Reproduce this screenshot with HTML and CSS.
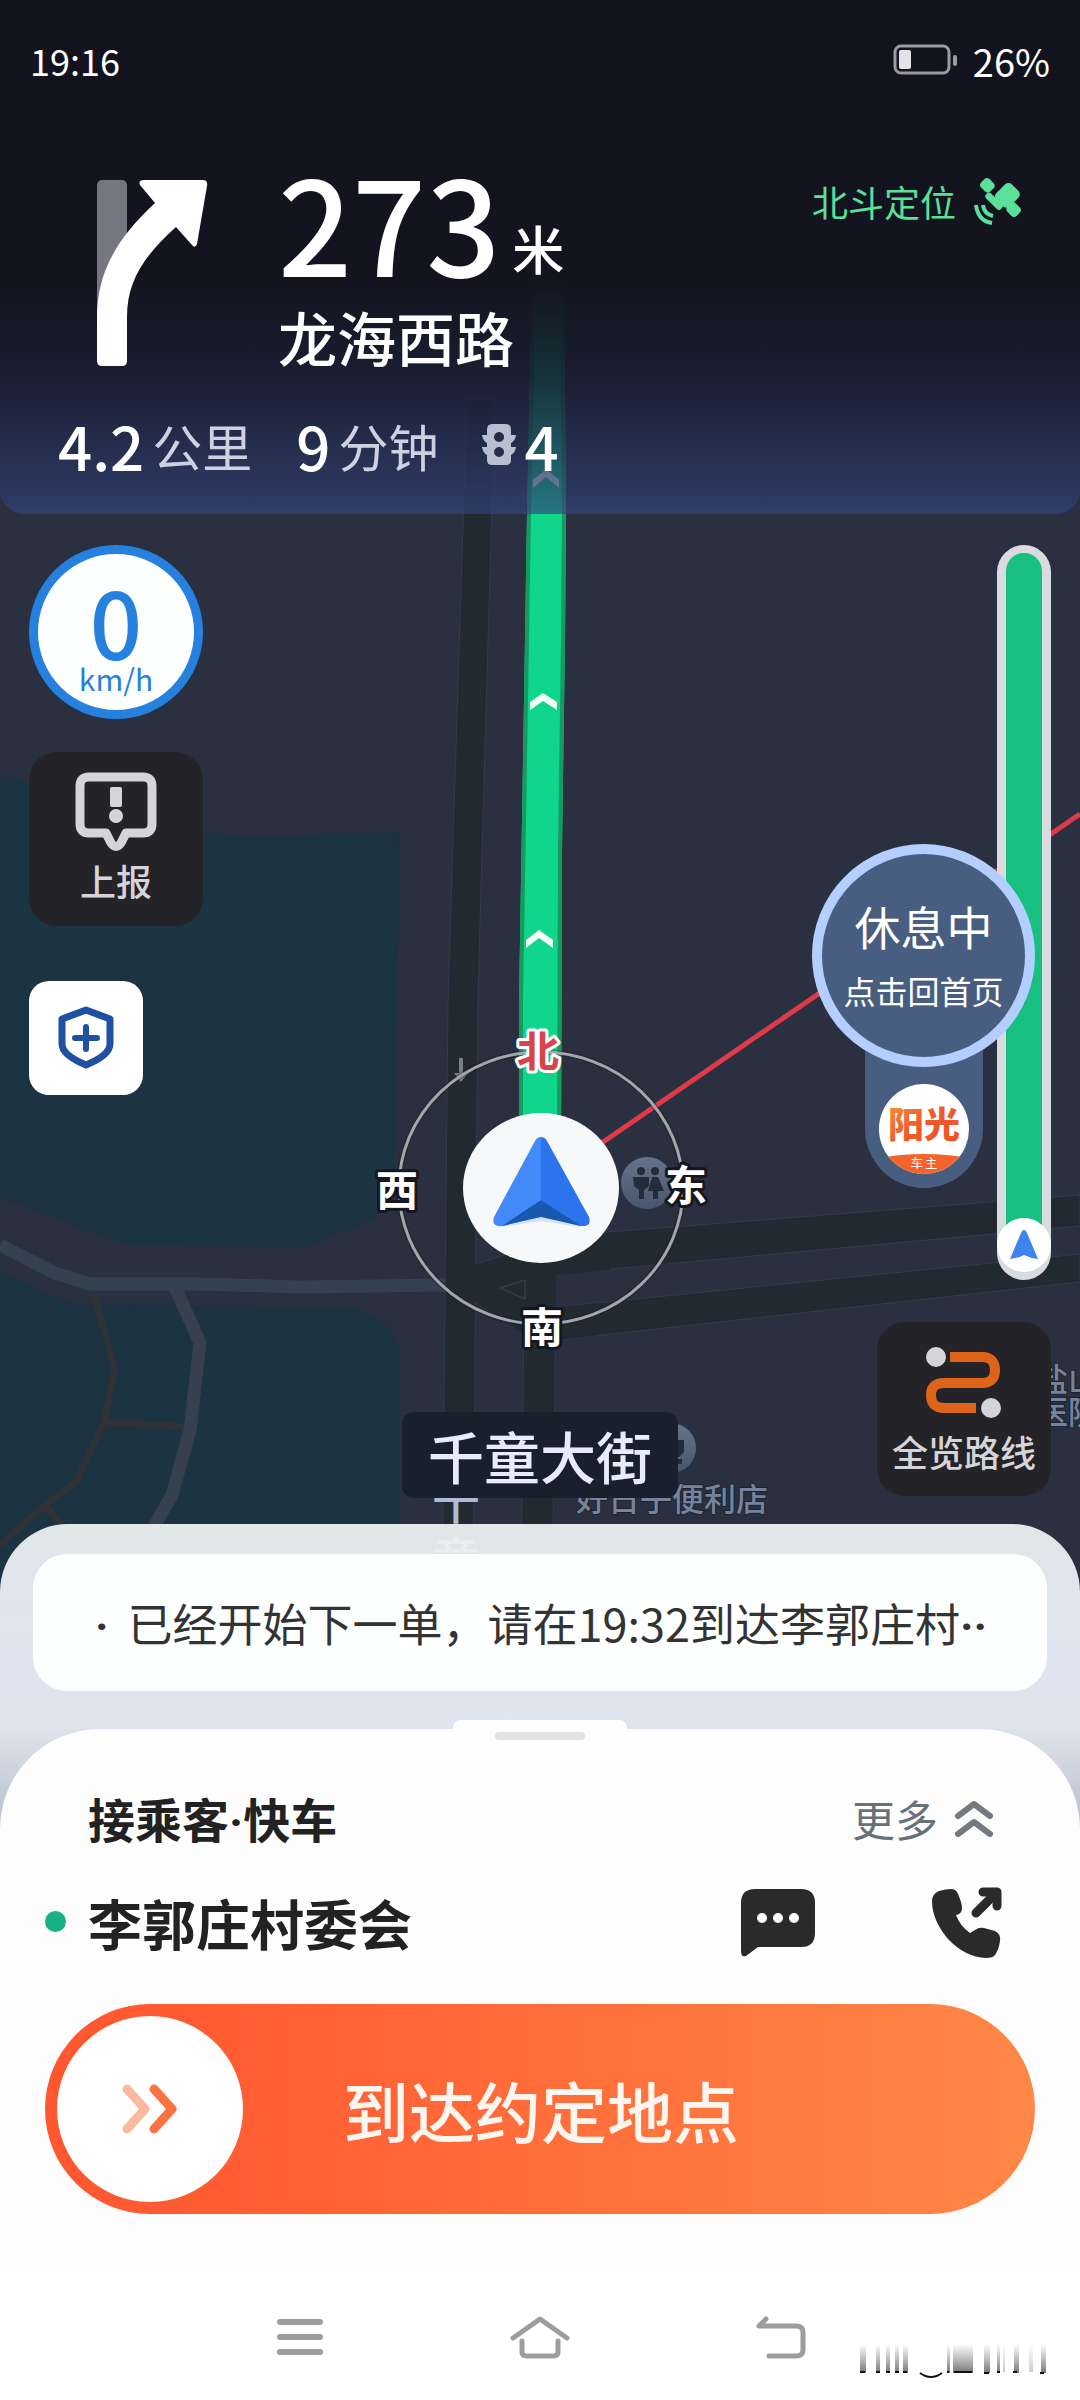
FILE: index.html
```html
<!DOCTYPE html>
<html lang="zh-CN">
<head>
<meta charset="utf-8">
<meta name="viewport" content="width=device-width, initial-scale=1">
<title>导航 - 接乘客</title>
<link rel="stylesheet" href="styles.css">
</head>
<body>
<div class="screen">
  <svg class="map" viewBox="0 0 1080 2400" preserveAspectRatio="xMidYMin slice" aria-hidden="true">
    <defs>
      <linearGradient id="poi" x1="0" y1="0" x2="0" y2="1"><stop offset="0" stop-color="#66748b"/><stop offset="1" stop-color="#48566c"/></linearGradient>
    </defs>
    <rect width="1080" height="2400" fill="#2a303f"/>
    <g fill="#1c3341">
      <path d="M0 775L30 782L230 837L400 832L394 1170Q392 1208 370 1221L305 1247L130 1245L90 1232L0 1197Z"/>
      <path d="M0 1272L70 1303L355 1308Q400 1322 400 1358V1900H0Z"/>
    </g>
    <g fill="none" stroke-linejoin="round">
      <path d="M95 1298L115 1370L104 1422L76 1482L45 1505L0 1545M104 1422L188 1427M45 1505L66 1530" stroke="#2f3237" stroke-width="7"/>
      <path d="M175 1287L200 1343L190 1430L172 1495L140 1550" stroke="#36404f" stroke-width="13"/>
      <path d="M0 1245L55 1273L90 1284H200L300 1287L445 1285" stroke="#344150" stroke-width="13"/>
    </g>
    <g fill="#222a31" stroke="#2e3d50" stroke-width="1">
      <path d="M557 1236L1080 1195V1226L557 1274Z"/>
      <path d="M557 1307L1080 1254V1282L557 1340Z"/>
      <path d="M467 400L448 1000L442 1600H473L478 1000L482 850L495 400Z"/>
      <path d="M524 1300L521 1600H552L556 1300Z"/>
    </g>
    <path d="M474 1265L540 1240L610 1236V1270L556 1275V1307L600 1303V1335L556 1340L525 1335L474 1300Z" fill="#222a31"/>
    <path d="M476 1180V1264L510 1253L560 1225V1180Z" fill="#2a303f" stroke="#2e3d50"/>
    <path d="M500 1288L525 1280V1299Z" fill="#222a31" stroke="#34465a"/>
    <path d="M519 1160V1000L524 700L527 514L532 270H564L566 514L565 640L562 850L561 1160Z" fill="#0fd68a"/>
    <path d="M521 1160V1000L526 700L529 514L534 270M559 1160L560 850L563 640L564 514L562 270" fill="none" stroke="#169a60" stroke-width="4"/>
    <g fill="#f4fff9">
      <path d="M530 702L543 693L557 702V710L543 701L530 710Z"/>
      <path d="M526 940L539 930L553 940V948L539 938L526 948Z"/>
      <path d="M533 480L546 469L559 480V488L546 477L533 488Z"/>
    </g>
    <path d="M461 1058V1078" stroke="#7c8187" stroke-width="4"/><path d="M454 1073L461 1082L468 1073Z" fill="#7c8187"/>
    <circle cx="647" cy="1183" r="26" fill="url(#poi)"/>
    <g fill="#232c3a"><circle cx="641" cy="1171" r="4"/><circle cx="655" cy="1171" r="4"/><path d="M633 1177H649V1186L644 1190V1199H639V1190L634 1186ZM652 1177H658L664 1191H658V1199H653V1191H648Z"/></g>
    <circle cx="671" cy="1448" r="25" fill="url(#poi)"/>
    <path d="M664 1440H684V1452L679 1457H664ZM676 1459h6v5h-6z" fill="#232c3a"/>
    <g class="poi-text">
      <text x="576" y="1511">好日子便利店</text>
      <text x="1036" y="1391">盐山</text>
      <text x="1036" y="1424">医院</text>
    </g>
    <g class="street-text"><text x="432" y="1519">千</text><text x="432" y="1578">童</text></g>
    <path d="M590 1151L1080 814" stroke="#df3a49" stroke-width="5"/>
    <ellipse cx="541" cy="1188" rx="142" ry="136" fill="none" stroke="#15181f" stroke-opacity=".3" stroke-width="6"/>
    <ellipse cx="541" cy="1188" rx="142" ry="136" fill="none" stroke="#a3a7ad" stroke-width="3"/>
    <ellipse cx="541" cy="1188" rx="78" ry="75" fill="#f6f8f9"/>
    <path d="M497 1217L541 1145L585 1217Q590 1224 580 1227L541 1221L501 1227Q492 1226 497 1217Z" fill="#9fc0fb" opacity=".4"/>
    <path d="M541 1137Q537 1137 535 1141L494 1217Q491 1227 502 1226L541 1216Z" fill="#4289fa"/>
    <path d="M541 1137Q545 1137 547 1141L589 1217Q592 1227 581 1226L541 1216Z" fill="#2c74ee"/>
    <path d="M541 1200L502 1226L541 1217L581 1226Z" fill="#1859ae"/>
    <g class="compass-text">
      <text class="north" x="538" y="1067">北</text>
      <text x="397" y="1206">西</text>
      <text x="686" y="1201">东</text>
      <text x="542" y="1343">南</text>
    </g>
  </svg>

  <header class="guide">
    <div class="status">
      <time>19:16</time>
      <div class="battery">
        <svg width="66" height="32" viewBox="0 0 66 32" aria-hidden="true"><rect x="2" y="2" width="54" height="27" rx="6" fill="none" stroke="#9a9ba3" stroke-width="3"/><rect x="6" y="6" width="12" height="19" rx="2" fill="#e3e3e6"/><rect x="60" y="11" width="4" height="11" rx="2" fill="#9a9ba3"/></svg>
        <span>26%</span>
      </div>
    </div>
    <div class="maneuver">
      <svg class="turn" width="112" height="188" viewBox="0 0 112 188" role="img" aria-label="右转"><rect x="0" y="0" width="30" height="140" rx="5" fill="#767780"/><path d="M0 181V135C1 93 18 60 58 23L43 5Q41 0 47 0H106Q111 0 110 6L100 64Q98 69 95 65L79 47C48 75 30 100 30 137V181Q30 186 25 186H5Q0 186 0 181Z" fill="#fff"/></svg>
      <div class="step">
        <p class="distance">273<span>米</span></p>
        <p class="road">龙海西路</p>
      </div>
      <div class="beidou">北斗定位
        <svg width="50" height="50" viewBox="0 0 50 50" aria-hidden="true"><g fill="#5be09a"><rect x="22" y="10" width="22" height="19" rx="5" transform="rotate(-45 33 19)"/><rect x="7" y="3" width="12" height="13" rx="4" transform="rotate(-45 13 9)"/><rect x="34" y="27" width="12" height="13" rx="4" transform="rotate(-45 40 34)"/><rect x="9" y="22" width="21" height="7" rx="3" transform="rotate(45 20 26)"/></g><path d="M9 29Q10 38 19 40M2 29Q4 45 18 47" fill="none" stroke="#5be09a" stroke-width="4"/></svg>
      </div>
    </div>
    <div class="trip">
      <span><b>4.2</b>公里</span>
      <span><b>9</b>分钟</span>
      <span><svg width="34" height="42" viewBox="0 0 34 42" role="img" aria-label="红绿灯"><path fill-rule="evenodd" d="M10 0H24Q29 0 29 6V11H34Q33 17 29 19V23H34Q33 29 29 31V36Q29 41 24 41H10Q5 41 5 36V31Q1 29 0 23H5V19Q1 17 0 11H5V6Q5 0 10 0ZM17 8a5 5 0 1 0 .1 0ZM17 23a5 5 0 1 0 .1 0Z" fill="#b9bfd0"/></svg><b>4</b></span>
    </div>
  </header>

  <main class="stage">
    <div class="tools">
      <div class="speed"><strong>0</strong><span>km/h</span></div>
      <button class="tile" type="button">
        <svg width="82" height="80" viewBox="0 0 82 80" aria-hidden="true"><path d="M14 5H68Q77 5 77 14V52Q77 61 68 61H51L46 71Q41 78 36 71L31 61H14Q5 61 5 52V14Q5 5 14 5Z" fill="none" stroke="#d5d4d8" stroke-width="9" stroke-linejoin="round"/><rect x="35" y="15" width="12" height="20" rx="2" fill="#d5d4d8"/><circle cx="41" cy="44" r="7" fill="#d5d4d8"/></svg>
        上报
      </button>
      <button class="safety" type="button" aria-label="安全中心">
        <svg width="56" height="66" viewBox="0 0 56 66" aria-hidden="true"><path d="M28 5L52 14V39Q52 50 28 60Q4 50 4 39V14Z" fill="none" stroke="#2050a2" stroke-width="7" stroke-linejoin="round"/><path d="M28 22V44M17 33H39" stroke="#2050a2" stroke-width="6" stroke-linecap="round"/></svg>
      </button>
    </div>
    <p class="current-road">千童大街</p>
    <div class="side">
      <div class="progress">
        <i class="progress-fill"></i>
        <span class="progress-dot"><svg width="28" height="30" viewBox="0 0 28 30" aria-hidden="true"><path d="M14 0Q16 0 17 3L28 29Q20 28 14 25Q8 28 0 29L11 3Q12 0 14 0Z" fill="#3f83ee"/></svg></span>
      </div>
      <button class="tile overview" type="button">
        <svg width="76" height="72" viewBox="0 0 76 72" aria-hidden="true"><path d="M24 10H56Q69 10 69 23Q69 36 56 36H18Q5 36 5 48Q5 61 18 61H50" fill="none" stroke="#dd6419" stroke-width="10"/><circle cx="10" cy="10" r="10" fill="#d5d4d8"/><circle cx="65" cy="61" r="10" fill="#d5d4d8"/></svg>
        全览路线
      </button>
    </div>
    <div class="rest">
      <button class="rest-bubble" type="button"><strong>休息中</strong><span>点击回首页</span></button>
      <div class="rest-tail">
        <svg width="90" height="90" viewBox="0 0 90 90" role="img" aria-label="阳光车主"><defs><clipPath id="disc"><circle cx="45" cy="45" r="45"/></clipPath><linearGradient id="sun" x1="0" y1="0" x2="1" y2="1"><stop offset="0" stop-color="#f79a3c"/><stop offset=".5" stop-color="#ef5a2c"/><stop offset="1" stop-color="#f0521f"/></linearGradient></defs><circle cx="45" cy="45" r="45" fill="#fff"/><path clip-path="url(#disc)" d="M0 74Q45 66 90 74V90H0Z" fill="#f4632a"/><text class="logo-name" x="45" y="54" fill="url(#sun)">阳光</text><text class="logo-sub" x="45" y="84">车 主</text></svg>
      </div>
    </div>
  </main>

  <section class="sheet">
    <p class="notice"><span class="dot bullet">·</span>已经开始下一单，请在19:32到达李郭庄村<span class="dot more-dots">··</span></p>
    <div class="panel">
      <span class="handle"></span>
      <div class="row">
        <h2>接乘客<span class="dot">·</span>快车</h2>
        <button class="more" type="button">更多
          <svg width="40" height="38" viewBox="0 0 40 38" aria-hidden="true"><path d="M4 17L20 5L36 17M4 35L20 23L36 35" fill="none" stroke="#737a82" stroke-width="6" stroke-linecap="round" stroke-linejoin="round"/></svg>
        </button>
      </div>
      <div class="row place">
        <h1>李郭庄村委会</h1>
        <div class="contact">
          <button type="button" aria-label="发消息"><svg width="74" height="68" viewBox="0 0 74 68" aria-hidden="true"><path d="M14 0H60Q74 0 74 14V44Q74 58 60 58H17L5 67Q0 69 0 62V14Q0 0 14 0Z" fill="#2a2a2b"/><g fill="#fff"><circle cx="21" cy="29" r="5"/><circle cx="37" cy="29" r="5"/><circle cx="53" cy="29" r="5"/></g></svg></button>
          <button type="button" aria-label="打电话"><svg width="72" height="72" viewBox="0 0 72 72" aria-hidden="true"><path d="M8 4Q15 2 20 2Q25 2 27 7Q31 16 31 21Q31 27 25 28Q29 39 39 46L44 43Q48 40 53 41L64 44Q70 47 69 54Q68 62 64 68Q62 71 55 71Q34 70 17 52Q1 33 1 14Q1 7 8 4Z" fill="#2a2a2b"/><path d="M45 26L63 8" stroke="#2a2a2b" stroke-width="9" stroke-linecap="round"/><path d="M52 5H66V19" fill="none" stroke="#2a2a2b" stroke-width="9" stroke-linecap="round" stroke-linejoin="round"/></svg></button>
        </div>
      </div>
      <button class="slide" type="button">
        <span class="knob"><svg width="56" height="52" viewBox="0 0 56 52" aria-hidden="true"><g fill="none" stroke-width="9" stroke-linecap="round" stroke-linejoin="round"><path d="M5 6L23 26L5 46" stroke="#fbb9a0"/><path d="M32 6L50 26L32 46" stroke="#fb7340"/></g></svg></span>
        <span class="slide-text">到达约定地点</span>
      </button>
    </div>
  </section>

  <nav class="keys">
    <button type="button" aria-label="最近任务"><svg width="60" height="44" viewBox="0 0 60 44" aria-hidden="true"><path d="M10 6H50M10 21H50M10 36H50" stroke="#9d9d9d" stroke-width="6" stroke-linecap="round"/></svg></button>
    <button type="button" aria-label="主页"><svg width="60" height="44" viewBox="0 0 60 44" aria-hidden="true"><path d="M3 22L30 3L57 22M12 25V36Q12 40 17 40H43Q48 40 48 36V25" fill="none" stroke="#9d9d9d" stroke-width="5" stroke-linecap="round" stroke-linejoin="round"/></svg></button>
    <button type="button" aria-label="返回"><svg width="60" height="44" viewBox="0 0 60 44" aria-hidden="true"><path d="M16 3L9 10H46Q53 10 53 16V34Q53 40 46 40H19" fill="none" stroke="#9d9d9d" stroke-width="5" stroke-linecap="round" stroke-linejoin="round"/></svg></button>
    <svg class="stamp" width="200" height="36" viewBox="0 0 200 36" aria-hidden="true">
      <defs><linearGradient id="fade" x1="0" y1="0" x2="0" y2="30" gradientUnits="userSpaceOnUse"><stop offset="0" stop-color="#555" stop-opacity="0"/><stop offset="1" stop-color="#444" stop-opacity=".75"/></linearGradient></defs>
      <g fill="url(#fade)"><path d="M2 0H8V29H2ZM18 0H22V29H18ZM28 0H32V29H28ZM37 0H41V29H37ZM45 0H50V29H45ZM89 0H92V29H89ZM95 0H115V29H95ZM126 0H132V29H126ZM139 0H142V29H139ZM156 0H161V29H156ZM183 0H188V29H183Z"/><path opacity=".4" d="M145 0H147V28H145ZM171 0H175V28H171Z"/></g>
      <path d="M2 28H7M18 28H22M28 28H32M37 28H41M45 28H49M62 29Q73 37 84 29M89 28H91M96 28H114M126 29H131M139 28H142M155 28H159M182 29H186" fill="none" stroke="#111" stroke-width="2"/>
    </svg>
  </nav>
</div>
</body>
</html>
```

FILE: styles.css
```css
* { box-sizing: border-box; }
body { margin: 0; font-family: "Noto Sans CJK SC", "Noto Sans", sans-serif; color: #222; }
p, h1, h2 { margin: 0; }
button { border: 0; padding: 0; background: none; color: inherit; font: inherit; cursor: pointer; }
svg { display: block; flex: none; }
.dot { font-family: Roboto, sans-serif; line-height: 1; }

.screen { position: relative; display: flex; flex-direction: column; min-height: 100vh; overflow: hidden; background: #2a303f; }
.map { position: absolute; top: 0; left: 0; width: 100%; height: 100%; }
.poi-text { font-size: 32px; font-weight: 500; fill: #76839d; stroke: #1d2431; stroke-width: 2px; paint-order: stroke; }
.street-text { font-size: 48px; font-weight: 500; fill: #aebbd6; }
.compass-text { font-size: 42px; font-weight: 700; fill: #fff; text-anchor: middle; stroke: #14171f; stroke-width: 6px; stroke-linejoin: round; paint-order: stroke; }
.compass-text .north { fill: #d9434b; stroke: #fff; }

/* guidance banner */
.guide { position: relative; color: #fff; border-radius: 0 0 24px 24px; padding-bottom: 29px;
  background: linear-gradient(#12131f 0, #13141f 280px, rgba(24, 28, 48, .88) 380px, rgba(50, 68, 126, .66) 100%); }
.status { display: flex; justify-content: space-between; align-items: center; height: 120px; padding: 0 30px; font-size: 36px; }
.battery { display: flex; align-items: center; gap: 14px; font-size: 38px; }
.maneuver { display: flex; margin-top: 35px; padding: 0 56px 0 97px; }
.turn { margin-top: 25px; }
.step { margin-left: 69px; }
.distance { display: flex; align-items: flex-end; gap: 12px; font-size: 130px; line-height: 130px; font-weight: 500; }
.distance span { font-size: 52px; line-height: 74px; }
.road { margin-top: 12px; font-size: 59px; line-height: 80px; font-weight: 500; }
.beidou { display: flex; align-items: center; gap: 18px; height: 48px; margin: 22px 0 0 auto; font-size: 36px; color: #5be09a; }
.trip { display: flex; gap: 44px; margin-top: 28px; padding-left: 58px; font-size: 50px; line-height: 80px; color: #cdd1e2; }
.trip span { display: flex; align-items: center; gap: 8px; }
.trip b { font-size: 60px; font-weight: 500; color: #fff; }

/* floating map controls */
.stage { position: relative; flex: 1; display: flex; justify-content: space-between; padding: 31px 29px 26px; }
.tools { display: flex; flex-direction: column; gap: 33px; }
.speed { display: flex; flex-direction: column; align-items: center; width: 174px; height: 174px; padding-top: 24px; border: 9px solid #2680dd; border-radius: 50%; background: #fdfefe; color: #2680dd; }
.speed strong { font-size: 92px; line-height: 84px; font-weight: 500; }
.speed span { font-size: 30px; line-height: 32px; }
.tile { display: flex; flex-direction: column; align-items: center; gap: 8px; width: 174px; height: 174px; padding-top: 20px; border-radius: 28px; background: #232328; color: #d5d4d8; font-size: 36px; line-height: 40px; font-weight: 500; }
.safety { display: grid; place-items: center; width: 114px; height: 114px; margin-top: 22px; border-radius: 20px; background: #fff; }
.current-road { align-self: flex-end; padding: 0 26px; border-radius: 12px; background: #19202d; color: #e8ecfa; font-size: 56px; line-height: 86px; font-weight: 500; }
.side { display: flex; flex-direction: column; align-items: flex-end; gap: 42px; }
.overview { padding-top: 25px; gap: 12px; }
.progress { position: relative; width: 54px; height: 735px; padding: 8px 9px; border-radius: 27px; background: #d9dbdf; }
.progress-fill { display: block; height: 690px; border-radius: 18px 18px 0 0; background: #17bf80; }
.progress-dot { position: absolute; left: 0; bottom: 8px; display: grid; place-items: center; width: 54px; height: 54px; border-radius: 50%; background: #fff; }
.rest { position: absolute; top: 330px; right: 45px; display: flex; flex-direction: column; align-items: center; }
.rest-bubble { position: relative; z-index: 1; display: flex; flex-direction: column; align-items: center; justify-content: center; gap: 14px; width: 223px; height: 223px; border: 10px solid #b3ceff; border-radius: 50%; background: #485e80; color: #fff; }
.rest-bubble strong { font-size: 46px; line-height: 54px; font-weight: 400; }
.rest-bubble span { font-size: 32px; line-height: 48px; }
.rest-tail { display: flex; flex-direction: column; align-items: center; width: 118px; margin-top: -40px; padding: 57px 0 14px; border-radius: 0 0 59px 59px; background: #485e80; }
.logo-name { font-size: 36px; font-weight: 900; text-anchor: middle; }
.logo-sub { font-size: 12px; fill: #fff; text-anchor: middle; }

/* order sheet */
.sheet { position: relative; padding-top: 30px; border-radius: 68px 68px 0 0;
  background: linear-gradient(rgba(238, 242, 243, .94) 0, rgba(226, 231, 243, .98) 140px, #dfe4ee 200px, #b6bdc9 310px); }
.notice { height: 137px; margin: 0 33px; padding: 0 62px; border-radius: 34px; background: #fdfefe; color: #333; font-size: 45px; line-height: 137px; white-space: nowrap; overflow: hidden; }
.bullet { margin-right: 19px; }
.more-dots, .bullet { font-weight: 700; }
.panel { position: relative; margin-top: 38px; padding: 59px 45px; border-radius: 100px 100px 0 0; background: #fdfdfd; }
.handle { position: absolute; top: -9px; left: 50%; width: 174px; height: 20px; margin-left: -87px; border-radius: 8px 8px 0 0; background: #fdfdfd; }
.handle::after { content: ""; position: absolute; left: 42px; top: 12px; width: 90px; height: 8px; border-radius: 4px; background: #e2e2e2; }
.row { display: flex; justify-content: space-between; align-items: center; padding: 0 32px 0 43px; }
.row h2 { font-size: 47px; line-height: 60px; font-weight: 700; }
.more { display: flex; align-items: center; gap: 16px; padding-right: 9px; font-size: 43px; line-height: 60px; color: #687078; }
.place { position: relative; margin-top: 39px; }
.place::before { content: ""; position: absolute; left: 0; top: 24px; width: 21px; height: 21px; border-radius: 50%; background: #17b183; }
.row h1 { font-size: 54px; line-height: 72px; font-weight: 700; }
.contact { display: flex; align-items: center; gap: 116px; }
.slide { display: flex; align-items: center; width: 100%; height: 210px; margin-top: 45px; padding-left: 12px; border-radius: 105px; background: linear-gradient(90deg, #ff5730 0, #ff5d33 20%, #ff8847 100%); color: #fff6f0; }
.knob { display: grid; place-items: center; width: 186px; height: 186px; border-radius: 50%; background: #fff; }
.slide-text { margin-left: 100px; font-size: 66px; font-weight: 500; }

/* system keys */
.keys { position: relative; display: flex; justify-content: center; gap: 180px; padding: 43px 0 40px; background: #fff; }
.stamp { position: absolute; right: 22px; bottom: 20px; }
```
